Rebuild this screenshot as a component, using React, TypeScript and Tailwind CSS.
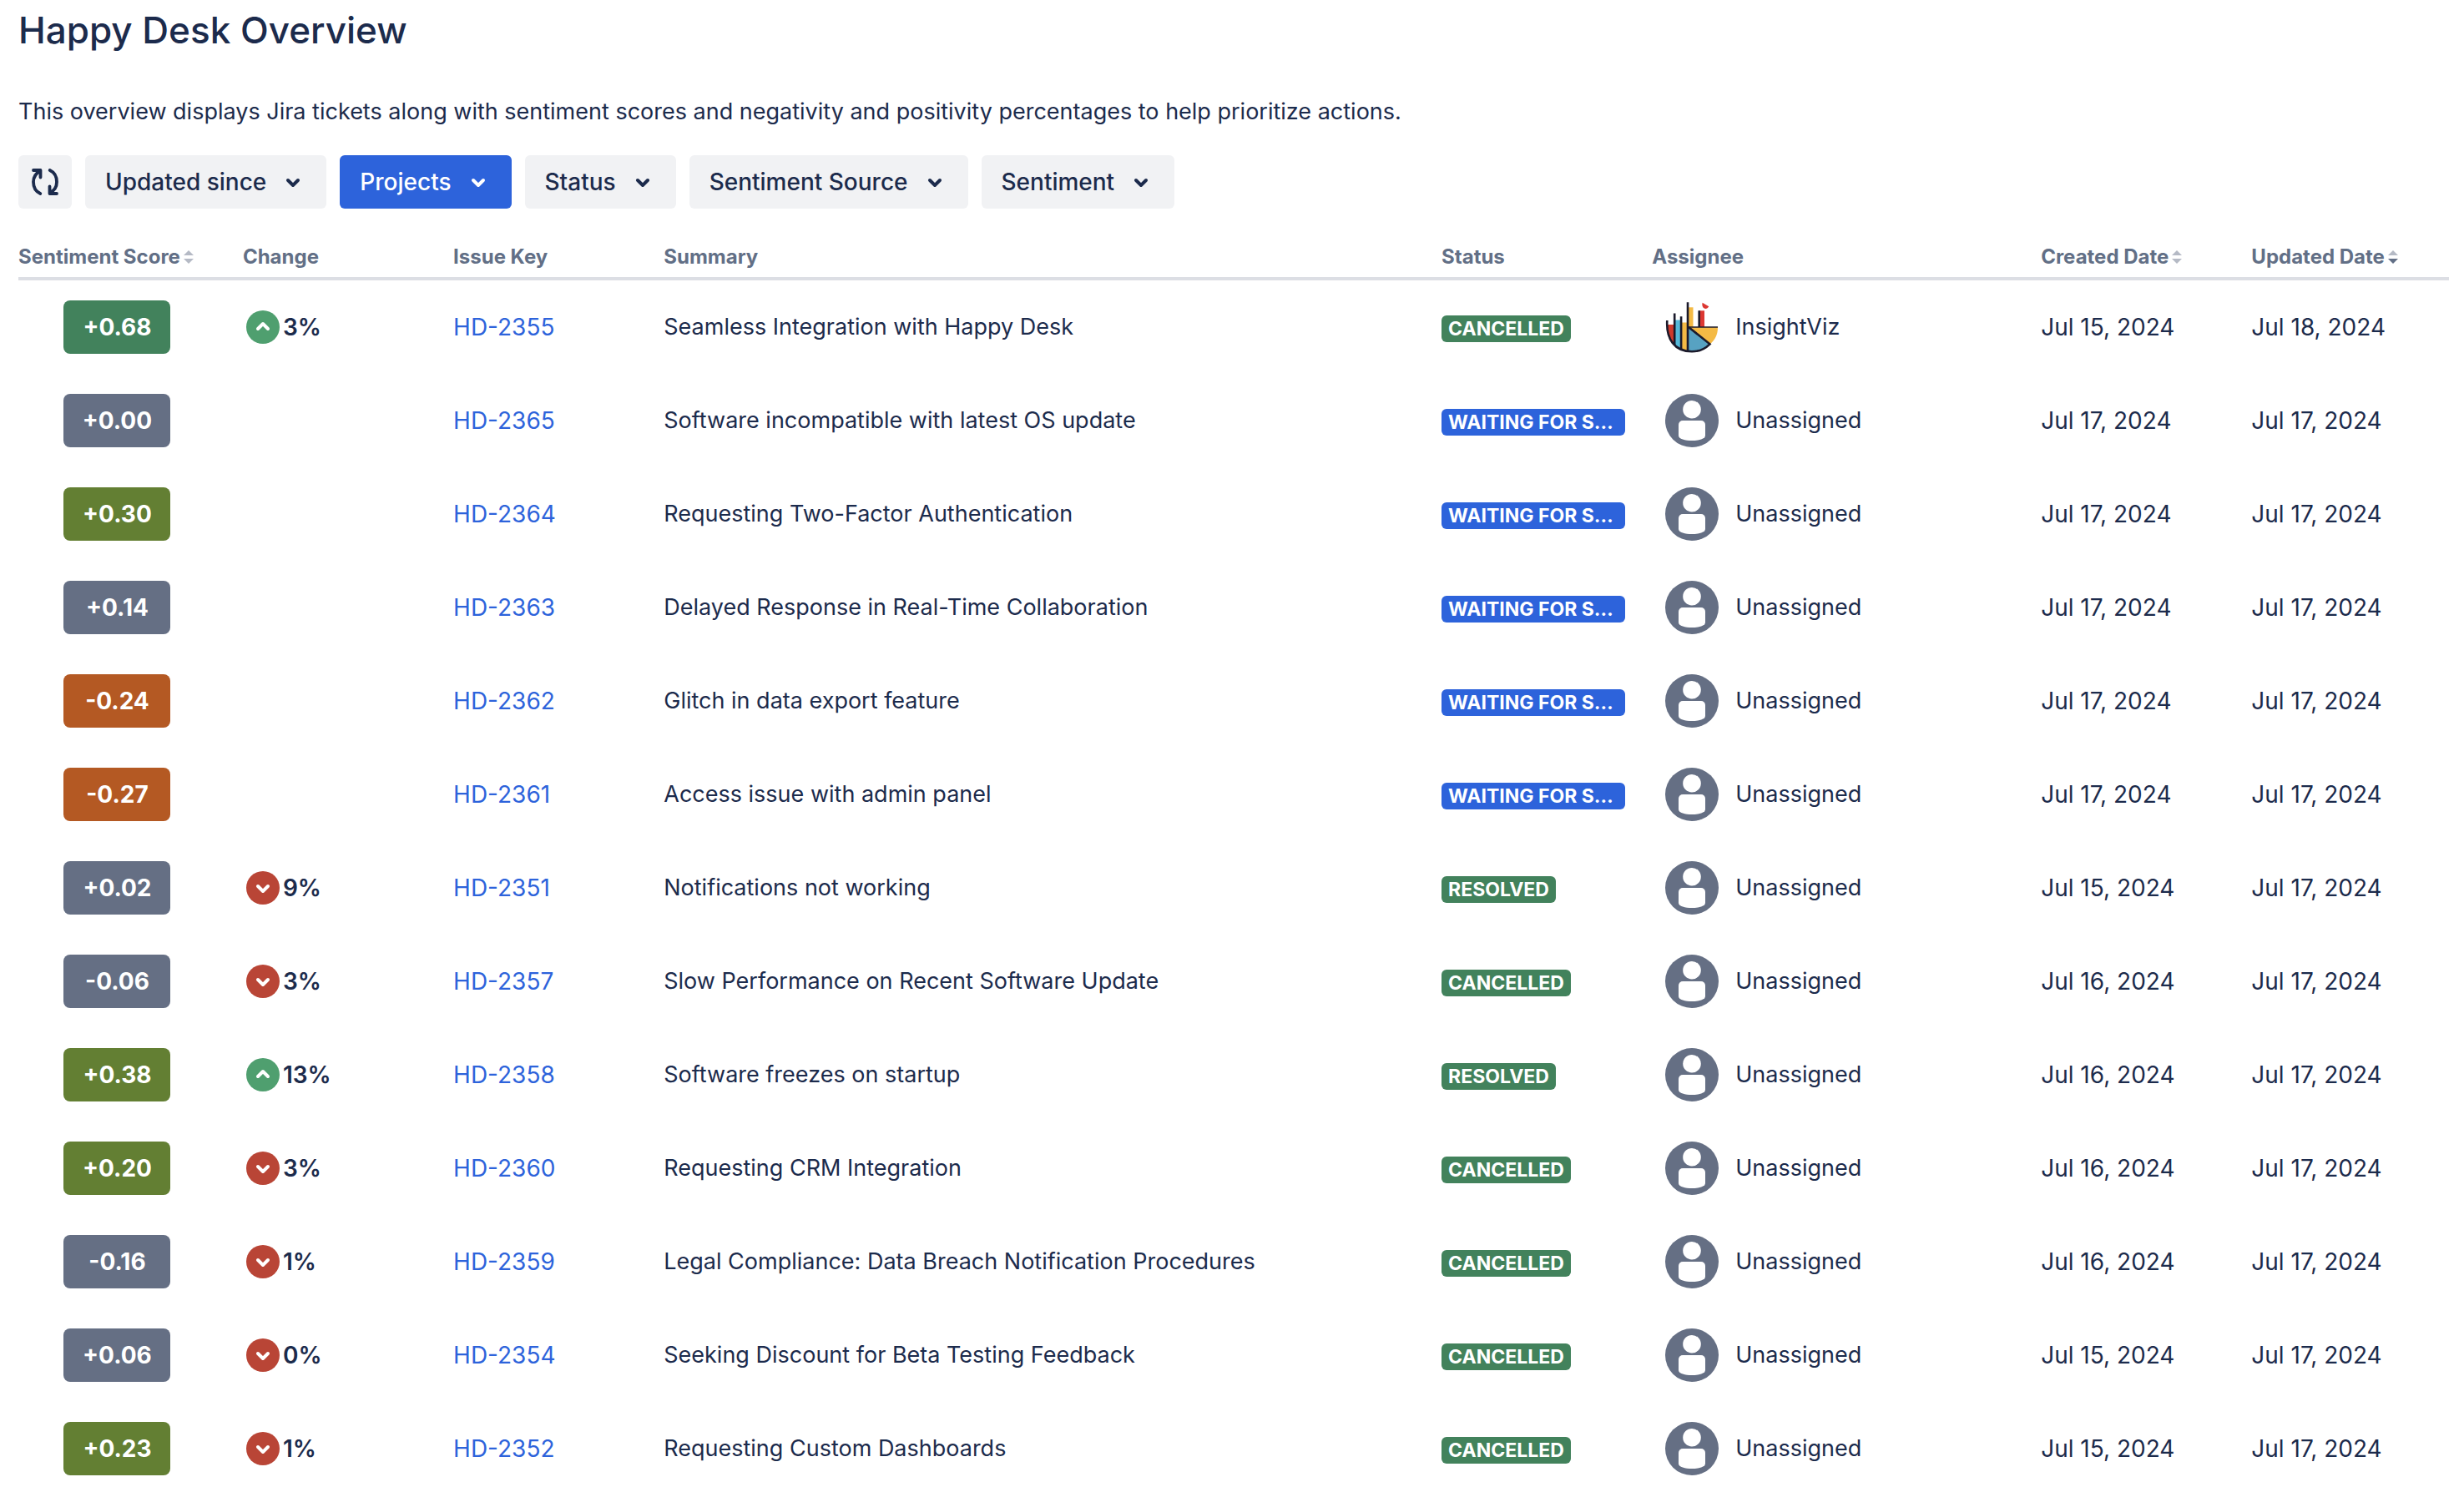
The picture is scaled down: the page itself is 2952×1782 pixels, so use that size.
import React from 'react'

type Ticket = {
  score: string
  tone: string
  change?: { direction: 'up' | 'down'; value: string }
  issueKey: string
  summary: string
  status: string
  assignee?: string
  created: string
  updated: string
}

const GREEN = 'bg-[#42825c]'
const OLIVE = 'bg-[#637f33]'
const GRAY = 'bg-[#656f84]'
const ORANGE = 'bg-[#b45923]'

const WAITING = 'Waiting for support'

const filters = [
  { label: 'Updated since' },
  { label: 'Projects', active: true },
  { label: 'Status' },
  { label: 'Sentiment Source' },
  { label: 'Sentiment' },
]

const tickets: Ticket[] = [
  { score: '+0.68', tone: GREEN, change: { direction: 'up', value: '3%' }, issueKey: 'HD-2355', summary: 'Seamless Integration with Happy Desk', status: 'Cancelled', assignee: 'InsightViz', created: 'Jul 15, 2024', updated: 'Jul 18, 2024' },
  { score: '+0.00', tone: GRAY, issueKey: 'HD-2365', summary: 'Software incompatible with latest OS update', status: WAITING, created: 'Jul 17, 2024', updated: 'Jul 17, 2024' },
  { score: '+0.30', tone: OLIVE, issueKey: 'HD-2364', summary: 'Requesting Two-Factor Authentication', status: WAITING, created: 'Jul 17, 2024', updated: 'Jul 17, 2024' },
  { score: '+0.14', tone: GRAY, issueKey: 'HD-2363', summary: 'Delayed Response in Real-Time Collaboration', status: WAITING, created: 'Jul 17, 2024', updated: 'Jul 17, 2024' },
  { score: '-0.24', tone: ORANGE, issueKey: 'HD-2362', summary: 'Glitch in data export feature', status: WAITING, created: 'Jul 17, 2024', updated: 'Jul 17, 2024' },
  { score: '-0.27', tone: ORANGE, issueKey: 'HD-2361', summary: 'Access issue with admin panel', status: WAITING, created: 'Jul 17, 2024', updated: 'Jul 17, 2024' },
  { score: '+0.02', tone: GRAY, change: { direction: 'down', value: '9%' }, issueKey: 'HD-2351', summary: 'Notifications not working', status: 'Resolved', created: 'Jul 15, 2024', updated: 'Jul 17, 2024' },
  { score: '-0.06', tone: GRAY, change: { direction: 'down', value: '3%' }, issueKey: 'HD-2357', summary: 'Slow Performance on Recent Software Update', status: 'Cancelled', created: 'Jul 16, 2024', updated: 'Jul 17, 2024' },
  { score: '+0.38', tone: OLIVE, change: { direction: 'up', value: '13%' }, issueKey: 'HD-2358', summary: 'Software freezes on startup', status: 'Resolved', created: 'Jul 16, 2024', updated: 'Jul 17, 2024' },
  { score: '+0.20', tone: OLIVE, change: { direction: 'down', value: '3%' }, issueKey: 'HD-2360', summary: 'Requesting CRM Integration', status: 'Cancelled', created: 'Jul 16, 2024', updated: 'Jul 17, 2024' },
  { score: '-0.16', tone: GRAY, change: { direction: 'down', value: '1%' }, issueKey: 'HD-2359', summary: 'Legal Compliance: Data Breach Notification Procedures', status: 'Cancelled', created: 'Jul 16, 2024', updated: 'Jul 17, 2024' },
  { score: '+0.06', tone: GRAY, change: { direction: 'down', value: '0%' }, issueKey: 'HD-2354', summary: 'Seeking Discount for Beta Testing Feedback', status: 'Cancelled', created: 'Jul 15, 2024', updated: 'Jul 17, 2024' },
  { score: '+0.23', tone: OLIVE, change: { direction: 'down', value: '1%' }, issueKey: 'HD-2352', summary: 'Requesting Custom Dashboards', status: 'Cancelled', created: 'Jul 15, 2024', updated: 'Jul 17, 2024' },
]

function RefreshIcon() {
  return (
    <svg viewBox="0 0 48 48" className="size-12" fill="none" stroke="currentColor" strokeWidth="3.8" strokeLinecap="round" strokeLinejoin="round" aria-hidden>
      <path d="M10 10h8.500v8.500M18 11C12.500 14 10 18.500 10 24c0 6 3 11.500 8.300 14" />
      <path d="M38 38h-8.500v-8.500M30 37c5.500-3 8-7.500 8-13 0-6-3-11.500-8.300-14" />
    </svg>
  )
}

function ChevronIcon() {
  return (
    <svg viewBox="0 0 48 48" className="size-12" fill="none" stroke="currentColor" strokeWidth="4" strokeLinecap="round" strokeLinejoin="round" aria-hidden>
      <path d="M18 22l6 6 6-6" />
    </svg>
  )
}

function ChangeIcon({ direction }: { direction: 'up' | 'down' }) {
  const up = direction === 'up'
  return (
    <svg viewBox="0 0 48 48" className="size-12" role="img" aria-label={up ? 'Up' : 'Down'}>
      <circle cx="24" cy="24" r="20" fill={up ? '#4f9f6f' : '#b94536'} />
      <path d={up ? 'M18 26l6-6 6 6' : 'M18 22l6 6 6-6'} fill="none" stroke="#fff" strokeWidth="4" strokeLinecap="round" strokeLinejoin="round" />
    </svg>
  )
}

function SortIcon({ sorted }: { sorted?: boolean }) {
  return (
    <svg viewBox="0 0 12 20" className="h-5 w-3" aria-hidden>
      <path d="M0 8l6-6 6 6z" fill="#b5bac5" />
      <path d="M0 12h12l-6 6z" fill={sorted ? '#626f86' : '#b5bac5'} />
    </svg>
  )
}

function PersonAvatar() {
  return (
    <svg viewBox="0 0 64 64" className="size-16" aria-hidden>
      <circle cx="32" cy="32" r="32" fill="#656f84" />
      <circle cx="32" cy="18.700" r="10.800" fill="#fff" />
      <path d="M16 37a5 5 0 0 1 5-5h22a5 5 0 0 1 5 5v13c0 4-8 6-16 6s-16-2-16-6z" fill="#fff" />
    </svg>
  )
}

function InsightVizAvatar() {
  return (
    <svg viewBox="0 0 64 64" className="size-16" aria-hidden>
      <path d="M2 29h9v25C5 49 2 41 2 29z" fill="#cf3a2c" />
      <path d="M11 23.500h8V59l-8-5z" fill="#55b8d8" />
      <path d="M19 26.500h8V61l-8-2z" fill="#f4ba45" />
      <path d="M28 8.300h5.500V32H28z" fill="#f4ba45" />
      <path d="M28 32l25.500 20.500C48 58 41 61.500 32 61.500h-4z" fill="#57a2c2" />
      <path d="M29 32h34c0 9-3 15-9.500 20.500z" fill="#f4ba45" />
      <path d="M41 12.300h6V32h-6z" fill="#dc3832" />
      <g fill="none" stroke="#1b1a2b" strokeWidth="2.600">
        <path d="M2.300 24C1 46 11 61.300 32 61.300c9 0 16-3.500 21.500-9L28 32" />
        <path d="M11.200 15.500V54M19.100 19.300V59M27 2.300V61M40.700 12.300V32" />
        <path d="M27 32h36" strokeWidth="1.500" />
      </g>
      <path d="M44.600 2.800l7.700 4.500c-1 2-3 2.900-5 2.500-2.500-.8-3.500-4-2.700-7z" fill="#dc3832" />
    </svg>
  )
}

function HeaderCell({ children, sortable, sorted, first }: { children: React.ReactNode; sortable?: boolean; sorted?: boolean; first?: boolean }) {
  return (
    <th
      scope="col"
      aria-sort={sorted ? 'descending' : undefined}
      className={`border-b-4 border-[#dcdee4] py-2 text-left font-bold ${first ? 'pl-0' : 'pl-2'}`}
    >
      {sortable ? (
        <button type="button" className="flex items-center gap-1 font-bold whitespace-nowrap">
          {children}
          <SortIcon sorted={sorted} />
        </button>
      ) : (
        children
      )}
    </th>
  )
}

function TicketRow({ ticket }: { ticket: Ticket }) {
  const { change } = ticket
  return (
    <tr className="h-28">
      <td className="pr-6">
        <div className={`mx-auto flex h-16 w-32 items-center justify-center rounded-lg font-bold text-white ${ticket.tone}`}>{ticket.score}</div>
      </td>
      <td className="pl-2">
        {change && (
          <div className="flex items-center font-semibold">
            <ChangeIcon direction={change.direction} />
            {change.value}
          </div>
        )}
      </td>
      <td className="pl-2">
        <a href={`#${ticket.issueKey}`} className="text-[#2d63db]">{ticket.issueKey}</a>
      </td>
      <td className="px-2 text-[27px]">{ticket.summary}</td>
      <td className="pt-1 pl-2">
        <div className={`w-fit max-w-[220px] truncate rounded-md px-2 text-[23px] leading-8 font-bold text-white uppercase ${ticket.status === WAITING ? 'bg-[#2d63db]' : GREEN}`}>
          {ticket.status}
        </div>
      </td>
      <td className="pl-6 text-[27px]">
        <div className="flex items-center gap-5">
          {ticket.assignee ? <InsightVizAvatar /> : <PersonAvatar />}
          {ticket.assignee ?? 'Unassigned'}
        </div>
      </td>
      <td className="pl-2">{ticket.created}</td>
      <td className="pl-2">{ticket.updated}</td>
    </tr>
  )
}

export default function App() {
  return (
    <main className="h-screen overflow-hidden bg-white pr-[18px] pl-[22px] font-['Inter',sans-serif] text-[28px] leading-10 text-[#1c2b4c]">
      <h1 className="pt-2 text-[44px] leading-14 font-medium">Happy Desk Overview</h1>
      <p className="mt-[50px] text-[27px]">
        This overview displays Jira tickets along with sentiment scores and negativity and positivity percentages to help prioritize actions.
      </p>

      <div className="mt-8 flex gap-4">
        <button type="button" aria-label="Refresh" className="flex size-16 items-center justify-center rounded-md bg-[#f1f2f4]">
          <RefreshIcon />
        </button>
        {filters.map(({ label, active }) => (
          <button
            key={label}
            type="button"
            aria-haspopup="listbox"
            className={`flex h-16 items-center gap-2 rounded-md pr-4 pl-6 font-medium ${active ? 'bg-[#2d63db] text-white' : 'bg-[#f1f2f4]'}`}
          >
            {label}
            <ChevronIcon />
          </button>
        ))}
      </div>

      <table className="mt-[34px] w-full table-fixed border-separate border-spacing-0">
        <colgroup>
          <col className="w-[8.96%]" />
          <col className="w-[8.66%]" />
          <col className="w-[8.66%]" />
          <col className="w-[32%]" />
          <col className="w-[8.66%]" />
          <col className="w-[16%]" />
          <col className="w-[8.66%]" />
          <col />
        </colgroup>
        <thead className="text-[24px] leading-8 text-[#626f86]">
          <tr>
            <HeaderCell first sortable>Sentiment Score</HeaderCell>
            <HeaderCell>Change</HeaderCell>
            <HeaderCell>Issue Key</HeaderCell>
            <HeaderCell>Summary</HeaderCell>
            <HeaderCell>Status</HeaderCell>
            <HeaderCell>Assignee</HeaderCell>
            <HeaderCell sortable>Created Date</HeaderCell>
            <HeaderCell sortable sorted>Updated Date</HeaderCell>
          </tr>
        </thead>
        <tbody>
          {tickets.map((ticket) => (
            <TicketRow key={ticket.issueKey} ticket={ticket} />
          ))}
        </tbody>
      </table>
    </main>
  )
}
